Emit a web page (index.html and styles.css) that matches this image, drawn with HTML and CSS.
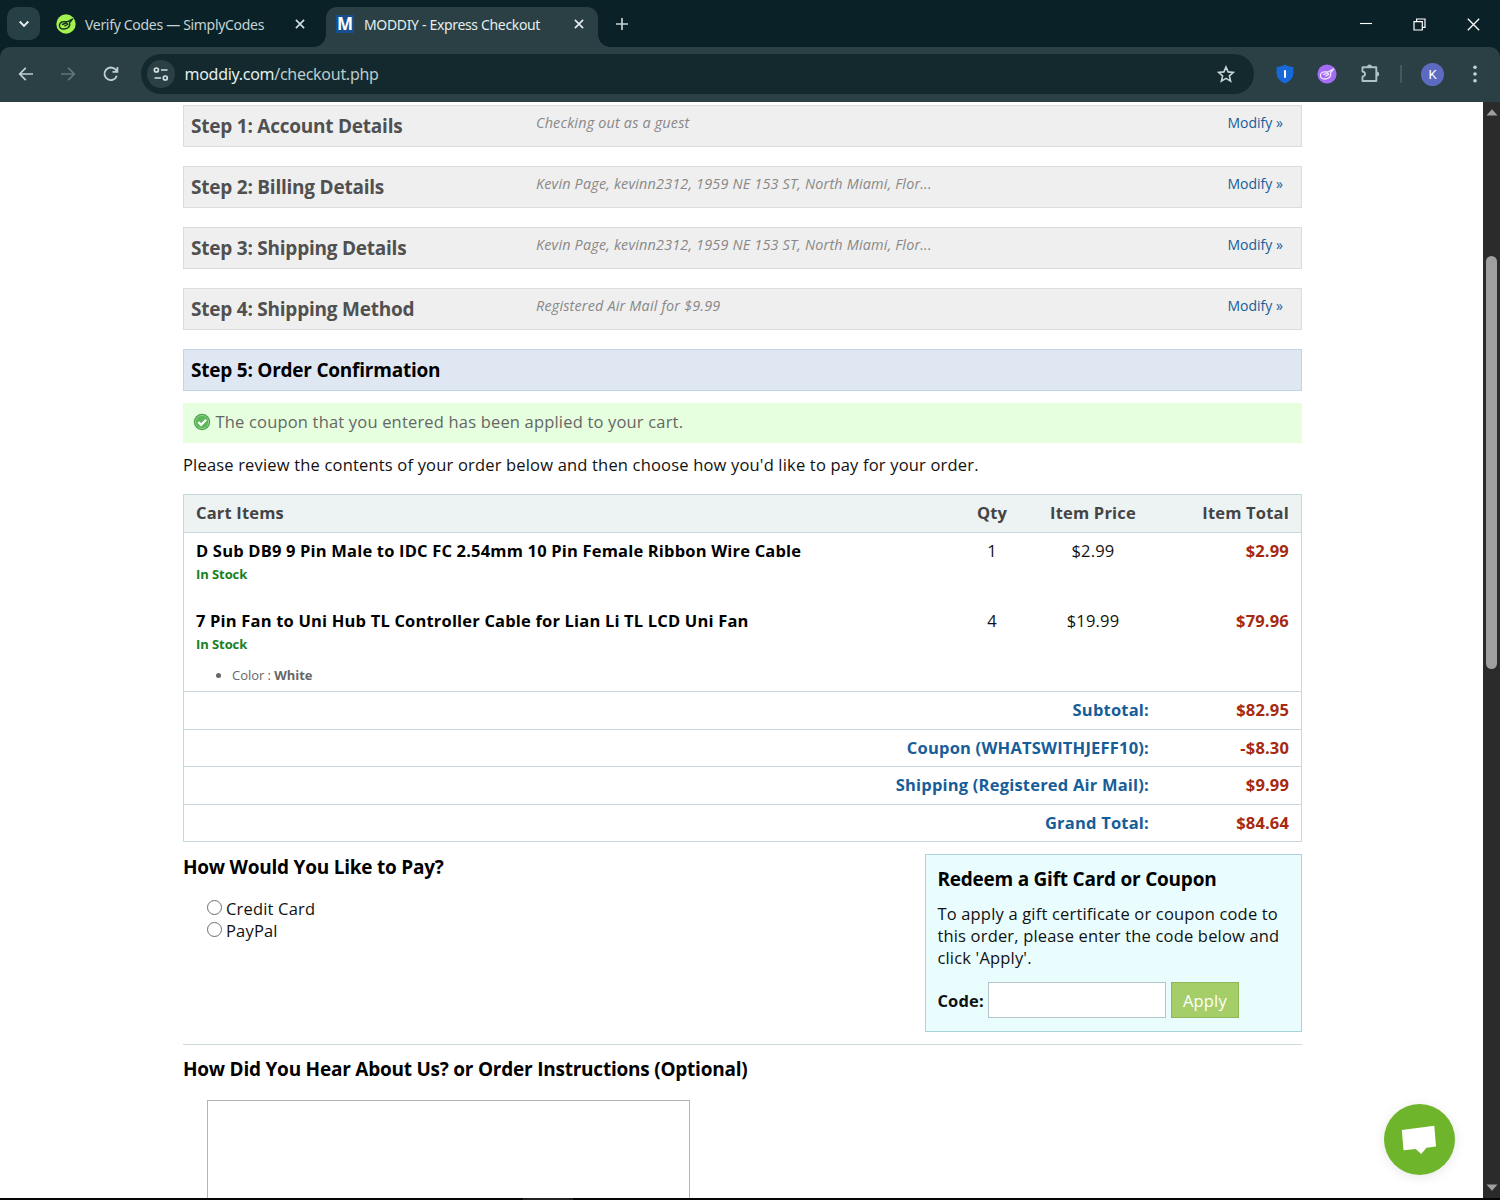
FILE: index.html
```html
<!DOCTYPE html>
<html lang="en">
<head>
<meta charset="utf-8">
<title>MODDIY - Express Checkout</title>
<link rel="stylesheet" href="styles.css">
</head>
<body>
<div class="window">
  <header class="tabstrip">
    <div class="tab-search"><svg width="12" height="8" viewBox="0 0 12 8"><path d="M1.7 1.5 6 5.8l4.3-4.3" fill="none" stroke="#e4eeee" stroke-width="1.9"/></svg></div>
    <div class="tab">
      <svg class="favicon" width="20" height="20" viewBox="0 0 20 20"><circle cx="10" cy="10" r="9.7" fill="#a4f24f"/><path d="M16.500 5l-4.800 2.600-4.500.2c-1.800 0-3.900 1.600-3.800 3.900.1 2.400 2 3.500 4.500 3.300 2.900-.2 4.900-1.200 5.600-3.200.4-1.200.300-2.100 0-2.900zM6.500 10.500l3.800-1.700 1.500 1.600-3 1.400" fill="none" stroke="#15301b" stroke-width="1.400" stroke-linecap="round" stroke-linejoin="round"/></svg>
      <span class="tab-title tab-title-verify">Verify Codes — SimplyCodes</span>
      <svg class="tab-close" width="10" height="10" viewBox="0 0 10 10"><path d="M.9.9l8.200 8.200M9.100.9.9 9.100" stroke="#d3e0e0" stroke-width="1.600"/></svg>
    </div>
    <div class="tab tab-active">
      <span class="favicon-m">M</span>
      <span class="tab-title tab-title-moddiy">MODDIY - Express Checkout</span>
      <svg class="tab-close" width="10" height="10" viewBox="0 0 10 10"><path d="M.9.9l8.200 8.200M9.100.9.9 9.100" stroke="#e4eeee" stroke-width="1.600"/></svg>
    </div>
    <svg class="tab-new" width="12" height="12" viewBox="0 0 12 12"><path d="M6 0v12M0 6h12" stroke="#c5d3d3" stroke-width="1.700"/></svg>
    <div class="window-controls">
      <svg width="12" height="12" viewBox="0 0 12 12"><path d="M0 5.500h12" stroke="#fff" stroke-width="1.100"/></svg>
      <svg width="13" height="13" viewBox="0 0 13 13" fill="none" stroke="#fff" stroke-width="1.200"><path d="M1 3.600h8.300V12H1zM3.600 3.600V1H12v8.300H9.300"/></svg>
      <svg width="13" height="13" viewBox="0 0 13 13"><path d="M.8.8l11.400 11.400M12.200.8.8 12.200" stroke="#fff" stroke-width="1.300"/></svg>
    </div>
  </header>
  <nav class="toolbar">
    <svg class="nav-back" width="16" height="14" viewBox="0 0 16 14"><path d="M15 7H2M7.800.9 1.700 7l6.100 6.100" fill="none" stroke="#c0d0d0" stroke-width="1.700"/></svg>
    <svg class="nav-forward" width="16" height="14" viewBox="0 0 16 14"><path d="M1 7h13M8.200.9 14.300 7l-6.100 6.100" fill="none" stroke="#617679" stroke-width="1.700"/></svg>
    <svg class="nav-reload" width="16" height="16" viewBox="0 0 16 16"><path d="M13.800 9.800A6.300 6.300 0 1 1 12.600 3.700L14.200 5.500M14.400.9v5H9.500" fill="none" stroke="#c0d0d0" stroke-width="1.800"/></svg>
    <div class="omnibox">
      <span class="site-info"><svg width="16" height="14" viewBox="0 0 16 14" fill="none" stroke="#d3e0e0" stroke-width="1.700"><circle cx="3.400" cy="3" r="2"/><path d="M8 3h6.500M1.500 11H8"/><circle cx="12.300" cy="11" r="2"/></svg></span>
      <span class="url">moddiy.com<span class="url-path">/checkout.php</span></span>
      <svg class="star" width="18" height="18" viewBox="0 0 18 18"><path d="M9 2l2.100 4.900 5.300.5-4 3.500 1.200 5.200L9 13.400l-4.600 2.700 1.200-5.200-4-3.500 5.300-.5z" fill="none" stroke="#c6d5d5" stroke-width="1.600"/></svg>
    </div>
    <svg class="shield" width="18" height="20" viewBox="0 0 18 20"><path d="M9 .5C6.500 2 4 2.800.6 3v6c0 5 3.500 8.500 8.400 10.400C13.900 17.500 17.400 14 17.400 9V3C14 2.800 11.500 2 9 .5z" fill="#1768d8"/><path d="M9 6.300v7.500" stroke="#fff" stroke-width="2"/></svg>
    <svg class="ext" width="20" height="20" viewBox="0 0 20 20"><circle cx="10" cy="10" r="9.600" fill="#a46bf5"/><path d="M16.500 5l-4.800 2.600-4.500.2c-1.800 0-3.900 1.600-3.800 3.900.1 2.400 2 3.500 4.500 3.300 2.900-.2 4.900-1.200 5.600-3.200.4-1.200.300-2.100 0-2.900zM6.500 10.500l3.800-1.700 1.500 1.600-3 1.400" fill="none" stroke="#f0e4ff" stroke-width="1.300" stroke-linecap="round" stroke-linejoin="round"/></svg>
    <svg class="puzzle" width="20" height="20" viewBox="0 0 20 20"><path d="M2.500 3.200h13.800v13.800H2.500v-4.300c3.400-.6 3.400-4.600 0-5.200z" fill="none" stroke="#adc2c3" stroke-width="1.900" stroke-linejoin="round"/><path d="M7 3a2.500 2.500 0 0 1 5 0zM16.600 7.600a2.500 2.500 0 0 1 0 5z" fill="#adc2c3"/></svg>
    <span class="toolbar-rule"></span>
    <span class="avatar">K</span>
    <svg class="menu" width="4" height="18" viewBox="0 0 4 18" fill="#c6d5d5"><circle cx="2" cy="2.200" r="1.800"/><circle cx="2" cy="9" r="1.800"/><circle cx="2" cy="15.800" r="1.800"/></svg>
  </nav>
  <div class="viewport">
    <main class="page">
      <section class="step"><h2>Step 1: Account Details</h2><em>Checking out as a guest</em><a>Modify »</a></section>
      <section class="step"><h2>Step 2: Billing Details</h2><em>Kevin Page, kevinn2312, 1959 NE 153 ST, North Miami, Flor...</em><a>Modify »</a></section>
      <section class="step"><h2>Step 3: Shipping Details</h2><em>Kevin Page, kevinn2312, 1959 NE 153 ST, North Miami, Flor...</em><a>Modify »</a></section>
      <section class="step"><h2>Step 4: Shipping Method</h2><em>Registered Air Mail for $9.99</em><a>Modify »</a></section>
      <section class="step step-current"><h2>Step 5: Order Confirmation</h2></section>
      <div class="success"><svg width="18" height="18" viewBox="0 0 18 18"><circle cx="9" cy="9" r="8.200" fill="#4fa34f"/><circle cx="9" cy="9" r="6.600" fill="#5cb85b" stroke="#8fce8b" stroke-width="1"/><path d="M5.300 9l2.800 2.800 5-5" fill="none" stroke="#fff" stroke-width="2.300"/></svg><span>The coupon that you entered has been applied to your cart.</span></div>
      <p class="intro">Please review the contents of your order below and then choose how you'd like to pay for your order.</p>
      <div class="cart">
        <div class="row head"><span>Cart Items</span><span class="c">Qty</span><span class="c">Item Price</span><span class="r">Item Total</span></div>
        <div class="row item"><div><b class="name">D Sub DB9 9 Pin Male to IDC FC 2.54mm 10 Pin Female Ribbon Wire Cable</b><b class="stock">In Stock</b></div><span class="c">1</span><span class="c">$2.99</span><b class="r money">$2.99</b></div>
        <div class="row item item-last"><div><b class="name">7 Pin Fan to Uni Hub TL Controller Cable for Lian Li TL LCD Uni Fan</b><b class="stock">In Stock</b><ul><li>Color : <b>White</b></li></ul></div><span class="c">4</span><span class="c">$19.99</span><b class="r money">$79.96</b></div>
        <div class="total"><span>Subtotal:</span><b class="money">$82.95</b></div>
        <div class="total"><span>Coupon (WHATSWITHJEFF10):</span><b class="money">-$8.30</b></div>
        <div class="total"><span>Shipping (Registered Air Mail):</span><b class="money">$9.99</b></div>
        <div class="total"><span>Grand Total:</span><b class="money">$84.64</b></div>
      </div>
      <div class="payment">
        <section class="methods">
          <h3>How Would You Like to Pay?</h3>
          <label><i class="radio"></i>Credit Card</label>
          <label><i class="radio"></i>PayPal</label>
        </section>
        <section class="coupon">
          <h3>Redeem a Gift Card or Coupon</h3>
          <p>To apply a gift certificate or coupon code to<br>this order, please enter the code below and<br>click 'Apply'.</p>
          <div class="code"><b>Code:</b><input type="text" aria-label="Code"><button>Apply</button></div>
        </section>
      </div>
      <section class="notes">
        <h3>How Did You Hear About Us? or Order Instructions (Optional)</h3>
        <textarea aria-label="Order instructions"></textarea>
      </section>
    </main>
    <aside class="scrollbar">
      <svg width="12" height="7" viewBox="0 0 12 7"><path d="M6 .3 11.500 6.500H.5z" fill="#a0a0a0"/></svg>
      <span class="thumb"></span>
      <svg class="down" width="12" height="7" viewBox="0 0 12 7"><path d="M6 6.700 11.500.5H.5z" fill="#a0a0a0"/></svg>
    </aside>
  </div>
  <footer class="edge"><span></span></footer>
  <div class="chat"><svg width="36" height="30" viewBox="0 0 36 30"><path d="M.8 5 33.300.8l1.700 20.700-9.600 1.200-5.200 6.300-5.500-5L2.500 25.300z" fill="#fff"/></svg></div>
</div>
</body>
</html>
```
FILE: styles.css
```css
* { box-sizing: border-box; }
body { margin: 0; font-family: "Open Sans", "Noto Sans", sans-serif; font-size: 16.500px; color: #111; background: #fff; }
h2, h3, p, ul { margin: 0; }
b { font-weight: 700; }
svg { display: block; flex: none; }
.window { width: 1500px; height: 1200px; overflow: hidden; position: relative; display: flex; flex-direction: column; background: #fff; }

/* Browser tab strip */
.tabstrip { height: 47px; flex: none; display: flex; align-items: flex-start; background: #0a2227; font-family: "Noto Sans", sans-serif; }
.tab-search { width: 33px; height: 33px; margin: 7px 0 0 7px; border-radius: 10px; background: #264045; display: flex; align-items: center; justify-content: center; }
.tab { height: 40px; margin-top: 7px; width: 272px; padding-left: 9px; display: flex; align-items: center; margin-left: 7px; padding-bottom: 6px; }
.tab:not(.tab-active) { width: 279px; }
.favicon { margin-right: 9px; }
.tab-title { flex: none; white-space: nowrap; font-size: 14px; color: #c5d3d3; line-height: 20px; padding-top: 2px; }
.tab-title-verify { width: 210px; letter-spacing: -.31px; }
.tab-title-moddiy { width: 210px; letter-spacing: -.34px; color: #e4eeee; }
.tab-active { position: relative; margin-left: 0; background: #2a4045; border-radius: 11px 11px 0 0; }
.tab-active::before, .tab-active::after { content: ""; position: absolute; bottom: 0; width: 12px; height: 12px; }
.tab-active::before { left: -12px; background: radial-gradient(circle at 0 0, transparent 11.500px, #2a4045 12px); }
.tab-active::after { right: -12px; background: radial-gradient(circle at 100% 0, transparent 11.500px, #2a4045 12px); }
.favicon-m { width: 18px; height: 18px; margin: 0 10px 0 1px; background: #14508f; color: #fff; font: 700 17px/18px "Open Sans", sans-serif; text-align: center; }
.tab-new { margin: 18px 0 0 17.500px; }
.window-controls { margin: 18px 20px 0 auto; display: flex; gap: 41px; }

/* Address bar */
.toolbar { height: 55px; flex: none; background: #2a4045; border-radius: 10px 10px 0 0; box-shadow: 0 -10px 0 #0a2227; display: flex; align-items: center; padding: 0 0 1px 18px; position: relative; clip-path: inset(0); }
.nav-forward { margin-left: 26px; }
.nav-reload { margin-left: 27px; }
.omnibox { width: 1113px; height: 40px; margin-left: 22px; border-radius: 20px; background: #13292e; display: flex; align-items: center; padding: 0 19px 0 6px; }
.site-info { width: 28px; height: 28px; border-radius: 50%; background: #2a4045; display: flex; align-items: center; justify-content: center; }
.url { margin-left: 9.500px; font: 16px/24px "Noto Sans", sans-serif; letter-spacing: -.28px; color: #e4eeee; }
.url-path { color: #bccbcb; }
.star { margin-left: auto; }
.shield { margin-left: 22px; }
.ext { margin-left: 23px; }
.puzzle { margin-left: 23px; }
.toolbar-rule { width: 2px; height: 18px; margin-left: 20px; background: #405a5f; }
.avatar { width: 23px; height: 23px; margin-left: 19px; border-radius: 50%; background: #5c6bc0; color: #fff; font: 13px/23px Roboto, sans-serif; text-align: center; }
.menu { margin-left: 29px; }

/* Page viewport */
.viewport { flex: 1; min-height: 0; display: flex; overflow: hidden; }
.page { width: 1483px; flex: none; padding: 3px 180.600px 0 183px; overflow: hidden; letter-spacing: .18px; }
.scrollbar { width: 17px; background: #2b2b2b; display: flex; flex-direction: column; align-items: center; padding: 7px 0 7px; }
.thumb { width: 11px; height: 413px; margin-top: 140px; border-radius: 6px; background: #9f9f9f; }
.down { margin-top: auto; }
.edge { height: 2px; flex: none; background: #050505; display: flex; justify-content: center; }
.edge span { width: 50px; margin-right: 404px; background: #222; }

/* Checkout steps */
.step { height: 42px; margin-bottom: 19px; padding: 0 18.500px 0 7px; border: 1px solid #dcdcdc; background: #efefef; display: flex; }
.step h2 { width: 345px; flex: none; font-size: 19px; line-height: 40px; font-weight: 700; letter-spacing: -.23px; color: #505050; white-space: nowrap; }
.step em { font-size: 14.400px; line-height: 19px; padding-top: 7px; letter-spacing: .18px; color: #888; white-space: nowrap; }
.step a { margin-left: auto; font-size: 14px; line-height: 19px; padding-top: 7px; letter-spacing: 0; color: #175d98; }
.step-current { background: #dfe7f3; border-color: #c2d5e8; margin-bottom: 12px; }
.step-current h2 { color: #000; }
.success { height: 40px; padding: 0 0 2px 10px; background: #e6ffdf; color: #666; display: flex; align-items: center; gap: 4.500px; line-height: 22px; }
.intro { margin-top: 11px; line-height: 22px; height: 40px; white-space: nowrap; }

/* Cart */
.cart { height: 348px; border: 1px solid #c6d8dc; }
.row { display: grid; grid-template-columns: 756px 80px 122px 134.900px; padding-left: 12px; line-height: 22px; }
.c { text-align: center; }
.r { text-align: right; }
.head { height: 37.500px; padding-top: 7px; border-bottom: 1px solid #c6d8dc; background: #edf2f3; font-weight: 700; color: #444; }
.item { height: 70px; padding-top: 7.500px; }
.item-last { height: 88.500px; }
.name { display: block; color: #000; letter-spacing: .18px; }
.stock { display: block; font-size: 13px; line-height: 18px; padding-top: 3px; letter-spacing: -.08px; color: #17801f; }
.money { color: #a52a10; letter-spacing: .15px; }
.item ul { margin-top: 13px; padding-left: 36px; font-size: 13px; line-height: 18px; letter-spacing: -.05px; color: #666; }
.total { height: 37.500px; border-top: 1px solid #c6d8dc; display: grid; grid-template-columns: 965px 140px; line-height: 22px; padding-top: 7px; text-align: right; font-weight: 700; letter-spacing: .2px; color: #175d98; }

/* Payment */
h3 { font-size: 19px; line-height: 26px; font-weight: 700; letter-spacing: -.23px; color: #000; white-space: nowrap; }
.payment { display: flex; justify-content: space-between; margin-top: 11.500px; padding-bottom: 12px; border-bottom: 1.500px solid #ccdcdd; }
.methods h3 { margin-bottom: 18px; }
.methods label { display: flex; align-items: flex-start; gap: 4px; margin-left: 24px; line-height: 22px; }
.radio { width: 15px; height: 15px; margin-top: 2px; border: 1px solid #6e6e6e; border-radius: 50%; background: #fff; }
.coupon { width: 377.500px; height: 178px; padding: 12px 12px 0 11.500px; border: 1px solid #a9d3d8; background: #e9fdff; white-space: nowrap; }
.coupon h3 { margin-top: -.5px; }
.coupon p { margin-top: 10.500px; line-height: 22.300px; }
.code { display: flex; align-items: center; margin-top: 13px; }
.code input { width: 178px; height: 36px; margin: 0 5px 0 4px; padding: 0 8px; border: 1px solid #b4c4cc; background: #fff; }
.code button { width: 68px; height: 36px; padding: 0; border: 1px solid #8fb957; background: #a5ce68; color: #fff; font: 16.500px "Open Sans", sans-serif; letter-spacing: .15px; }
.notes { padding-top: 11px; }
.notes textarea { display: block; width: 483px; height: 160px; margin: 18px 0 0 24px; border: 1px solid #b4b4b8; resize: none; background: #fff; }

/* Chat launcher floats over the page */
.chat { position: absolute; left: 1384px; top: 1104px; width: 71px; height: 71px; border-radius: 50%; background: #6eb52b; box-shadow: 0 2px 12px #0000001a; display: flex; align-items: center; justify-content: center; padding-right: 2px; }
```
